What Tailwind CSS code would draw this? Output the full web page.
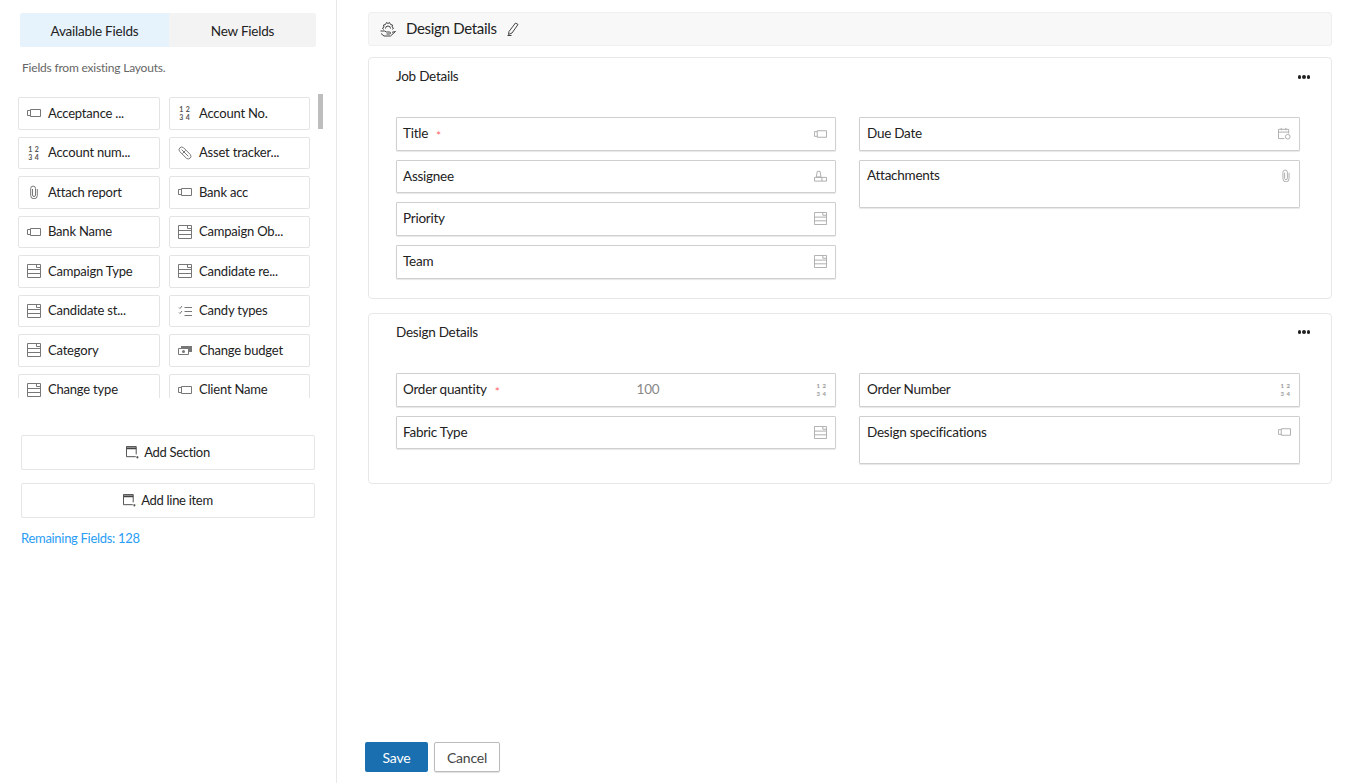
<!DOCTYPE html>
<html lang="en">
<head>
  <meta charset="UTF-8">
  <title>Layout Editor</title>
  <script src="https://cdn.jsdelivr.net/npm/@tailwindcss/browser@4"></script>
</head>
<body class="h-[783px] overflow-hidden bg-white font-['Lato','Open_Sans',sans-serif] text-[14px] text-[#222]">
  <svg class="hidden">
    <symbol id="i-text" viewBox="0 0 14 10"><path d="M3.500 1.500H13.500v7H3.500zM3.500 2.500H.5v5h3" fill="none" stroke="currentColor" stroke-width="1"/></symbol>
    <symbol id="i-pick" viewBox="0 0 14 14"><path d="M.5.5h13v13H.5zM.5 5.500h13M.5 9.500h13M9.500.5v3h4" fill="none" stroke="currentColor" stroke-width="1"/></symbol>
    <symbol id="i-clip" viewBox="0 0 10 14"><path d="M3.500 4v6a1.500 1.500 0 0 0 3 0V3.500a2.300 2.300 0 0 0-4.800 0v7a3.300 3.300 0 0 0 6.600 0V4" fill="none" stroke="currentColor" stroke-width="1"/></symbol>
    <symbol id="i-link" viewBox="0 0 14 14"><path d="M1.700 5.500a2.700 2.700 0 0 1 3.800-3.800l6.800 6.800a2.700 2.700 0 0 1-3.800 3.800zM3.600 3.600 10.400 10.400M4.500 7.500l3-3" fill="none" stroke="currentColor" stroke-width="1"/></symbol>
    <symbol id="i-check" viewBox="0 0 14 12"><path d="M6.500 2.500H14M6.500 6.500H14M6.500 10.500H14M1 2.500 2 3.500 4 1M1 7.500 2 8.500 4 6" fill="none" stroke="currentColor" stroke-width="1"/></symbol>
    <symbol id="i-money" viewBox="0 0 14 10"><path d="M3 1h11v6H3z" fill="currentColor"/><path d="M.5 3.500h10v6H.5z" fill="#fff" stroke="currentColor"/><circle cx="5.500" cy="6.500" r="1.500" fill="currentColor"/></symbol>
    <symbol id="i-user" viewBox="0 0 14 12"><path d="M3.500 1h3l1 6h-5zM.5 7.500h13v4H.5zM8.500 7.500v4" fill="none" stroke="currentColor" stroke-width="1"/></symbol>
    <symbol id="i-date" viewBox="0 0 14 14"><path d="M7 12.500H.5v-10h11V7M.5 5.500h11M3.500 1v2.500M8.500 1v2.500" fill="none" stroke="currentColor" stroke-width="1"/><circle cx="10.500" cy="10.500" r="2.500" fill="none" stroke="currentColor"/></symbol>
    <symbol id="i-section" viewBox="0 0 14 14"><path d="M10.500 11.500H.5V.5h10.500v8.500" fill="none" stroke="currentColor" stroke-width="1"/><path d="M.5 2.500h10.500" stroke="currentColor" stroke-width="2"/><path d="M11 12h2.500M12.200 11v2.500" stroke="currentColor" stroke-width="1"/></symbol>
  </svg>

  <div class="flex h-full">
    <aside class="w-[337px] shrink-0 border-r border-[#e8e8e8] pt-[13px]">
      <div class="ml-5 flex h-[34px] w-[296px] text-center text-[13.500px] leading-[36px] tracking-[-0.2px]">
        <div class="w-[149px] rounded-l-[2px] bg-[#e6f3fd]">Available Fields</div>
        <div class="flex-1 rounded-r-[2px] bg-[#f3f3f3]">New Fields</div>
      </div>
      <p class="mt-[13px] ml-[22px] h-[16px] text-[12px] leading-[16px] tracking-[-0.2px] text-[#666]">Fields from existing Layouts.</p>

      <div class="relative mt-[13px] h-[309px] overflow-hidden">
        <div class="mt-[8px] ml-[18px] grid w-[292px] grid-cols-[142px_141px] gap-x-[9px] gap-y-[7px] text-[13px] tracking-[-0.2px]">
          <div class="flex h-[32.500px] items-center rounded-[2px] border border-[#e4e4e4]"><svg class="mr-[7px] ml-[8px] h-[10px] w-[14px] text-[#777]"><use href="#i-text"/></svg>Acceptance ...</div>
          <div class="flex h-[32.500px] items-center rounded-[2px] border border-[#e4e4e4]"><span class="mr-[8px] ml-[8px] grid w-[13px] grid-cols-2 text-center text-[7px] leading-[8px] font-bold text-[#555]"><span>1</span><span>2</span><span>3</span><span>4</span></span>Account No.</div>
          <div class="flex h-[32.500px] items-center rounded-[2px] border border-[#e4e4e4]"><span class="mr-[8px] ml-[8px] grid w-[13px] grid-cols-2 text-center text-[7px] leading-[8px] font-bold text-[#555]"><span>1</span><span>2</span><span>3</span><span>4</span></span>Account num...</div>
          <div class="flex h-[32.500px] items-center rounded-[2px] border border-[#e4e4e4]"><svg class="mr-[7px] ml-[8px] h-[14px] w-[14px] text-[#777]"><use href="#i-link"/></svg>Asset tracker...</div>
          <div class="flex h-[32.500px] items-center rounded-[2px] border border-[#e4e4e4]"><svg class="mr-[9px] ml-[10px] h-[14px] w-[10px] text-[#777]"><use href="#i-clip"/></svg>Attach report</div>
          <div class="flex h-[32.500px] items-center rounded-[2px] border border-[#e4e4e4]"><svg class="mr-[7px] ml-[8px] h-[10px] w-[14px] text-[#777]"><use href="#i-text"/></svg>Bank acc</div>
          <div class="flex h-[32.500px] items-center rounded-[2px] border border-[#e4e4e4]"><svg class="mr-[7px] ml-[8px] h-[10px] w-[14px] text-[#777]"><use href="#i-text"/></svg>Bank Name</div>
          <div class="flex h-[32.500px] items-center rounded-[2px] border border-[#e4e4e4]"><svg class="mr-[7px] ml-[8px] h-[14px] w-[14px] text-[#777]"><use href="#i-pick"/></svg>Campaign Ob...</div>
          <div class="flex h-[32.500px] items-center rounded-[2px] border border-[#e4e4e4]"><svg class="mr-[7px] ml-[8px] h-[14px] w-[14px] text-[#777]"><use href="#i-pick"/></svg>Campaign Type</div>
          <div class="flex h-[32.500px] items-center rounded-[2px] border border-[#e4e4e4]"><svg class="mr-[7px] ml-[8px] h-[14px] w-[14px] text-[#777]"><use href="#i-pick"/></svg>Candidate re...</div>
          <div class="flex h-[32.500px] items-center rounded-[2px] border border-[#e4e4e4]"><svg class="mr-[7px] ml-[8px] h-[14px] w-[14px] text-[#777]"><use href="#i-pick"/></svg>Candidate st...</div>
          <div class="flex h-[32.500px] items-center rounded-[2px] border border-[#e4e4e4]"><svg class="mr-[7px] ml-[8px] h-[12px] w-[14px] text-[#777]"><use href="#i-check"/></svg>Candy types</div>
          <div class="flex h-[32.500px] items-center rounded-[2px] border border-[#e4e4e4]"><svg class="mr-[7px] ml-[8px] h-[14px] w-[14px] text-[#777]"><use href="#i-pick"/></svg>Category</div>
          <div class="flex h-[32.500px] items-center rounded-[2px] border border-[#e4e4e4]"><svg class="mr-[7px] ml-[8px] h-[10px] w-[14px] text-[#777]"><use href="#i-money"/></svg>Change budget</div>
          <div class="flex h-[32.500px] items-center rounded-[2px] border border-[#e4e4e4]"><svg class="mr-[7px] ml-[8px] h-[14px] w-[14px] text-[#777]"><use href="#i-pick"/></svg>Change type</div>
          <div class="flex h-[32.500px] items-center rounded-[2px] border border-[#e4e4e4]"><svg class="mr-[7px] ml-[8px] h-[10px] w-[14px] text-[#777]"><use href="#i-text"/></svg>Client Name</div>
        </div>
        <div class="absolute top-[5px] left-[318px] h-[35px] w-[5px] bg-[#bdbdbd]"></div>
      </div>

      <button class="mt-[37px] ml-[21px] flex h-[35px] w-[294px] items-center justify-center gap-[5px] rounded-[2px] border border-[#e6e6e6] text-[13px] tracking-[-0.3px]"><svg class="h-[13px] w-[13px] text-[#444]"><use href="#i-section"/></svg>Add Section</button>
      <button class="mt-[13px] ml-[21px] flex h-[35px] w-[294px] items-center justify-center gap-[5px] rounded-[2px] border border-[#e6e6e6] text-[13px] tracking-[-0.3px]"><svg class="h-[13px] w-[13px] text-[#444]"><use href="#i-section"/></svg>Add line item</button>
      <p class="mt-[11px] ml-[21px] text-[13px] leading-[18px] tracking-[-0.3px] text-[#2a9df4]">Remaining Fields: 128</p>
    </aside>

    <main class="flex min-w-0 flex-1 flex-col pt-3 pl-[31px] text-[13.500px] tracking-[-0.250px]">
      <div class="flex h-[34px] w-[964px] items-center rounded-[3px] border border-[#efefef] bg-[#f8f8f8] pb-[2px] pl-[11px] text-[15px] tracking-[-0.3px]">
        <svg class="mt-[2px] mr-[10px] h-[16px] w-[16px] text-[#444]" viewBox="0 0 16 16"><path d="M3.500 8.500 2.500 7 4 6 3.500 4 5.500 3.500 6.500 1.500 8 2.500 9.500 1.500 10.500 3.500 12.500 4 12 6 13.500 7 12.500 8.500M5.500 7.500a2.500 2.500 0 0 1 5 0" fill="none" stroke="currentColor" stroke-width="1"/><path d="M.5 10h4l2 1H9.500a1 1 0 0 1 0 2H6.500M1 12.500l3 2.500h6.500l5-4.500-3.500.8" fill="none" stroke="currentColor" stroke-width="1"/></svg>
        Design Details
        <svg class="mt-[2px] ml-[10px] h-[14px] w-[12px] text-[#444]" viewBox="0 0 12 14"><path d="M2 9.500 8.500 1l2.500 1.500L5 11l-3.500 1.500zM.5 13.500h4" fill="none" stroke="currentColor" stroke-width="1"/></svg>
      </div>

      <section class="mt-[11px] h-[242px] w-[964px] rounded-[4px] border border-[#e8e8e8]">
        <div class="flex h-[59px] items-start justify-between pt-[8px] pr-[21px] pl-[27px]">
          <h2 class="leading-[20px]">Job Details</h2>
          <span class="mt-[9px] flex gap-[1px]"><i class="h-[3.500px] w-[3.500px] rounded-full bg-[#222]"></i><i class="h-[3.500px] w-[3.500px] rounded-full bg-[#222]"></i><i class="h-[3.500px] w-[3.500px] rounded-full bg-[#222]"></i></span>
        </div>
        <div class="flex gap-[23px] pl-[27px]">
          <div class="flex w-[440px] flex-col gap-[9px]">
            <div class="flex h-[34px] items-center rounded-[1px] border border-[#cfcfcf] pr-[8px] pb-[1px] pl-[6px] shadow-[0_1px_1px_#e8e8e8]">Title<span class="mt-[5px] ml-[8px] text-[12px] text-[#f66]">*</span><svg class="ml-auto h-[10px] w-[13px] text-[#aaa]"><use href="#i-text"/></svg></div>
            <div class="flex h-[33px] items-center rounded-[1px] border border-[#cfcfcf] pr-[8px] pb-[1px] pl-[6px] shadow-[0_1px_1px_#e8e8e8]">Assignee<svg class="ml-auto h-[12px] w-[13px] text-[#aaa]"><use href="#i-user"/></svg></div>
            <div class="flex h-[34px] items-center rounded-[1px] border border-[#cfcfcf] pr-[8px] pb-[1px] pl-[6px] shadow-[0_1px_1px_#e8e8e8]">Priority<svg class="ml-auto h-[13px] w-[13px] text-[#aaa]"><use href="#i-pick"/></svg></div>
            <div class="flex h-[34px] items-center rounded-[1px] border border-[#cfcfcf] pr-[8px] pb-[1px] pl-[6px] shadow-[0_1px_1px_#e8e8e8]">Team<svg class="ml-auto h-[13px] w-[13px] text-[#aaa]"><use href="#i-pick"/></svg></div>
          </div>
          <div class="flex w-[441px] flex-col gap-[9px]">
            <div class="flex h-[34px] items-center rounded-[1px] border border-[#cfcfcf] pr-[8px] pb-[1px] pl-[7px] shadow-[0_1px_1px_#e8e8e8]">Due Date<svg class="ml-auto h-[13px] w-[13px] text-[#aaa]"><use href="#i-date"/></svg></div>
            <div class="flex h-[48px] items-start rounded-[1px] border border-[#cfcfcf] pt-[5px] pr-[8px] pl-[7px] leading-[18px] shadow-[0_1px_1px_#e8e8e8]">Attachments<svg class="mt-[3px] ml-auto h-[13px] w-[10px] text-[#aaa]"><use href="#i-clip"/></svg></div>
          </div>
        </div>
      </section>

      <section class="mt-[14px] h-[171px] w-[964px] rounded-[4px] border border-[#e8e8e8]">
        <div class="flex h-[59px] items-start justify-between pt-[8px] pr-[21px] pl-[27px]">
          <h2 class="leading-[20px]">Design Details</h2>
          <span class="mt-[8px] flex gap-[1px]"><i class="h-[3.500px] w-[3.500px] rounded-full bg-[#222]"></i><i class="h-[3.500px] w-[3.500px] rounded-full bg-[#222]"></i><i class="h-[3.500px] w-[3.500px] rounded-full bg-[#222]"></i></span>
        </div>
        <div class="flex gap-[23px] pl-[27px]">
          <div class="flex w-[440px] flex-col gap-[9px]">
            <div class="flex h-[34px] items-center rounded-[1px] border border-[#cfcfcf] pr-[8px] pb-[1px] pl-[6px] shadow-[0_1px_1px_#e8e8e8]">Order quantity<span class="mt-[5px] ml-[8px] text-[12px] text-[#f66]">*</span><span class="ml-[137px] text-[#888]">100</span><span class="ml-auto grid w-[12px] grid-cols-2 text-center text-[6px] leading-[8px] font-bold text-[#999]"><span>1</span><span>2</span><span>3</span><span>4</span></span></div>
            <div class="flex h-[33px] items-center rounded-[1px] border border-[#cfcfcf] pr-[8px] pl-[6px] shadow-[0_1px_1px_#e8e8e8]">Fabric Type<svg class="ml-auto h-[13px] w-[13px] text-[#aaa]"><use href="#i-pick"/></svg></div>
          </div>
          <div class="flex w-[441px] flex-col gap-[9px]">
            <div class="flex h-[34px] items-center rounded-[1px] border border-[#cfcfcf] pr-[8px] pb-[1px] pl-[7px] shadow-[0_1px_1px_#e8e8e8]">Order Number<span class="ml-auto grid w-[12px] grid-cols-2 text-center text-[6px] leading-[8px] font-bold text-[#999]"><span>1</span><span>2</span><span>3</span><span>4</span></span></div>
            <div class="flex h-[48px] items-start rounded-[1px] border border-[#cfcfcf] pt-[6px] pr-[8px] pl-[7px] leading-[18px] shadow-[0_1px_1px_#e8e8e8]">Design specifications<svg class="mt-[4px] ml-auto h-[10px] w-[13px] text-[#aaa]"><use href="#i-text"/></svg></div>
          </div>
        </div>
      </section>

      <div class="mt-auto mb-[11px] -ml-[3px] flex gap-[6px] text-[14px] tracking-[-0.2px]">
        <button class="h-[30px] w-[63px] rounded-[2px] bg-[#1a6fb0] text-white">Save</button>
        <button class="h-[30px] w-[66px] rounded-[2px] border border-[#bbb] text-[#444] shadow-[0_1px_1px_#e0e0e0]">Cancel</button>
      </div>
    </main>
  </div>
</body>
</html>
